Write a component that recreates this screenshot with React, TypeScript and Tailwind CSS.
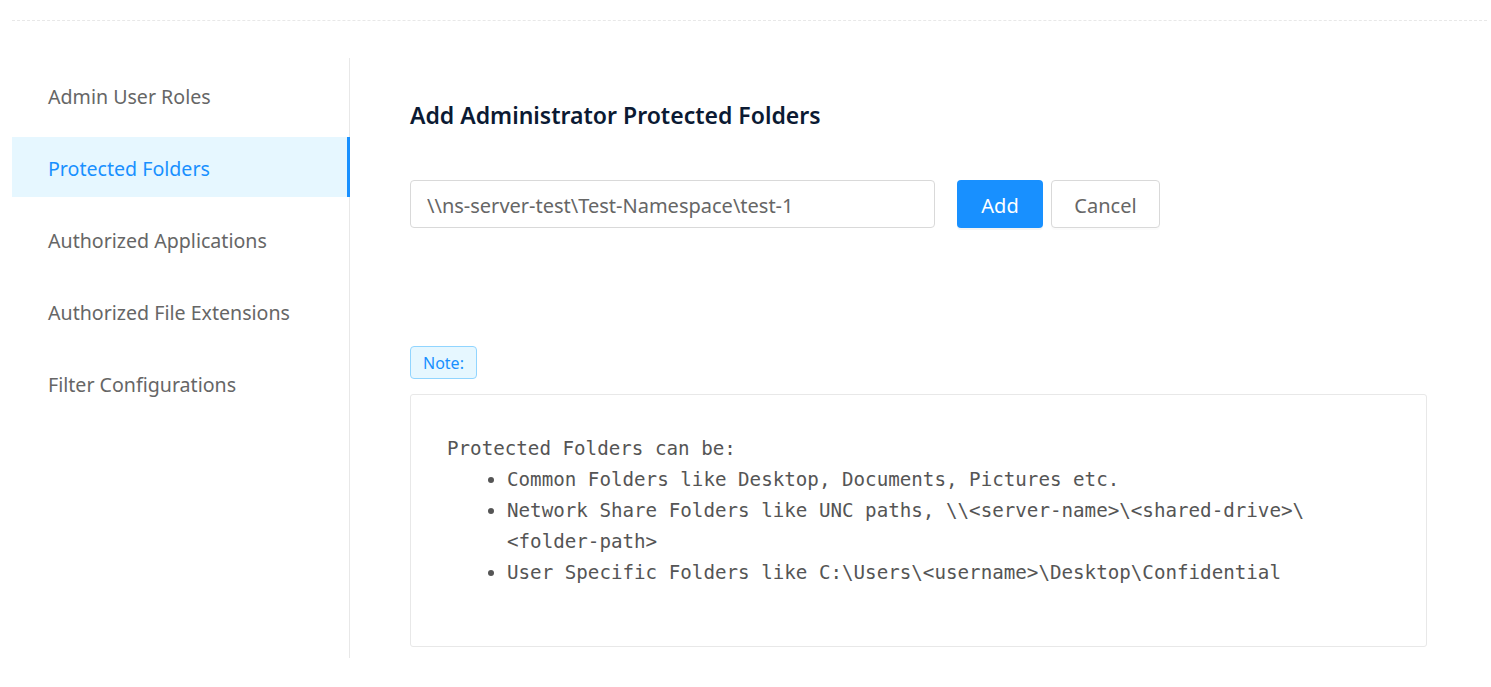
import clsx from 'clsx';

const menu = [
  'Admin User Roles',
  'Protected Folders',
  'Authorized Applications',
  'Authorized File Extensions',
  'Filter Configurations',
];

export default function App() {
  const active = 'Protected Folders';

  return (
    <div className="min-h-screen bg-white px-[12px] font-['Noto_Sans','Open_Sans',sans-serif]">
      {/* top divider */}
      <div className="h-[21px] border-b border-dashed border-[#e8e8e8] mr-[-8px]" />

      <div className="flex mt-[37px]">
        {/* Sidebar */}
        <aside className="w-[338px] h-[600px] flex-shrink-0 border-r border-[#e8e8e8] pt-[7px] flex flex-col gap-[12px]">
          {menu.map(item => (
            <div
              key={item}
              className={clsx(
                'h-[60px] flex items-center pl-[36px] pt-[4px] text-[19.6px] mr-[-1px]',
                item === active
                  ? 'bg-[#e6f7ff] text-[#1890ff] border-r-[3px] border-[#1890ff]'
                  : 'text-[#666666]'
              )}
            >
              {item}
            </div>
          ))}
        </aside>

        {/* Content */}
        <main className="flex-1 pl-[60px] pr-[52px] pt-[42px]">
          <h2 className="text-[23px] leading-[30px] font-semibold text-[#0b1a33]">
            Add Administrator Protected Folders
          </h2>

          <div className="flex items-center mt-[50px]">
            <input
              readOnly
              value="\\ns-server-test\Test-Namespace\test-1"
              className="w-[525px] h-[48px] border border-[#d9d9d9] rounded-[4px] px-[16px] pt-[3px] text-[20px] text-[#666666] outline-none"
            />
            <button className="ml-[22px] w-[86px] h-[48px] pt-[3px] rounded-[4px] bg-[#1890ff] text-white text-[20px] shadow-[0_2px_0_rgba(0,0,0,0.045)]">
              Add
            </button>
            <button className="ml-[8px] w-[109px] h-[48px] pt-[3px] rounded-[4px] border border-[#d9d9d9] bg-white text-[#666666] text-[20px] shadow-[0_2px_0_rgba(0,0,0,0.015)]">
              Cancel
            </button>
          </div>

          <div className="mt-[118px]">
            <span className="inline-flex items-center h-[33px] px-[12px] pt-[1px] rounded-[4px] border border-[#91d5ff] bg-[#e6f7ff] text-[#1890ff] text-[16px]">
              Note:
            </span>
          </div>

          {/* Note box */}
          <div className="mt-[15px] h-[253px] border border-[#e8e8e8] rounded-[3px] pl-[36px] pt-[38px] font-['DejaVu_Sans_Mono',monospace] text-[19.2px] leading-[31px] text-[#555555]">
            <div>Protected Folders can be:</div>
            <ul className="list-disc pl-[60px]">
              <li>Common Folders like Desktop, Documents, Pictures etc.</li>
              <li>
                Network Share Folders like UNC paths, \\&lt;server-name&gt;\&lt;shared-drive&gt;\
                <br />
                &lt;folder-path&gt;
              </li>
              <li>User Specific Folders like C:\Users\&lt;username&gt;\Desktop\Confidential</li>
            </ul>
          </div>
        </main>
      </div>
    </div>
  );
}
